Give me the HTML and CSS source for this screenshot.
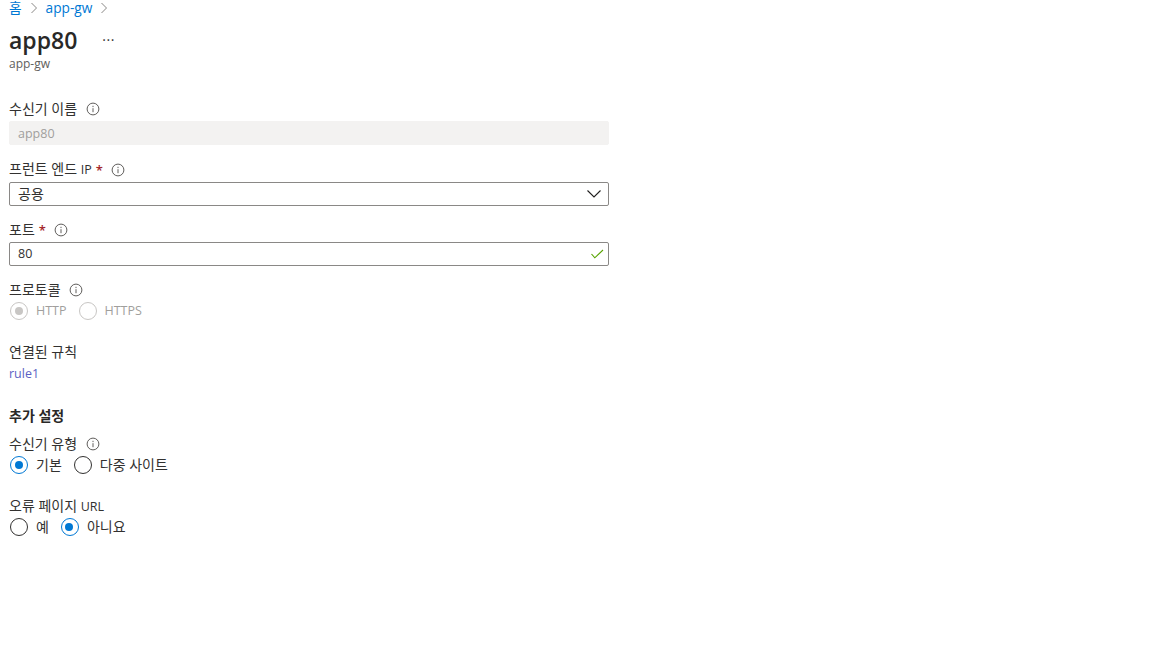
FILE: index.html
```html
<!DOCTYPE html>
<html lang="ko">
<head>
<meta charset="utf-8">
<title>app80</title>
<link rel="stylesheet" href="styles.css">
</head>
<body>
<nav class="crumbs">
  <a class="crumb">홈</a>
  <svg class="chev" viewBox="0 0 8 12"><path d="M1.5 1l5 5-5 5"/></svg>
  <a class="crumb">app-gw</a>
  <svg class="chev" viewBox="0 0 8 12"><path d="M1.5 1l5 5-5 5"/></svg>
</nav>
<header class="head">
  <div class="title-row"><h1 class="title">app80</h1><span class="more">···</span></div>
  <div class="sub">app-gw</div>
</header>
<main class="form">
  <section class="field f-name">
    <div class="label"><span>수신기 이름</span><svg class="info" viewBox="0 0 14 14"><circle cx="7" cy="7" r="5.9"/><path d="M7 6.2v4M7 3.8v1.3"/></svg></div>
    <div class="input disabled lat">app80</div>
  </section>
  <section class="field">
    <div class="label"><span>프런트 엔드 <span class="lat">IP</span></span><span class="req">*</span><svg class="info" viewBox="0 0 14 14"><circle cx="7" cy="7" r="5.9"/><path d="M7 6.2v4M7 3.8v1.3"/></svg></div>
    <div class="input">공용<svg class="end caret" viewBox="0 0 16 10"><path d="M1.5 1.5l6.5 6.5 6.5-6.5"/></svg></div>
  </section>
  <section class="field">
    <div class="label"><span>포트</span><span class="req">*</span><svg class="info" viewBox="0 0 14 14"><circle cx="7" cy="7" r="5.9"/><path d="M7 6.2v4M7 3.8v1.3"/></svg></div>
    <div class="input lat">80<svg class="end tick" viewBox="0 0 14 10"><path d="M1.5 5l3.3 3.8L13 1"/></svg></div>
  </section>
  <section class="field">
    <div class="label"><span>프로토콜</span><svg class="info" viewBox="0 0 14 14"><circle cx="7" cy="7" r="5.9"/><path d="M7 6.2v4M7 3.8v1.3"/></svg></div>
    <div class="radios off lat">
      <span class="radio"><i class="dot on"></i>HTTP</span>
      <span class="radio"><i class="dot"></i>HTTPS</span>
    </div>
  </section>
  <section class="field f-rule">
    <div class="label"><span>연결된 규칙</span></div>
    <a class="link lat">rule1</a>
  </section>
  <h2 class="section">추가 설정</h2>
  <section class="field f-type">
    <div class="label"><span>수신기 유형</span><svg class="info" viewBox="0 0 14 14"><circle cx="7" cy="7" r="5.9"/><path d="M7 6.2v4M7 3.8v1.3"/></svg></div>
    <div class="radios">
      <span class="radio"><i class="dot on"></i>기본</span>
      <span class="radio"><i class="dot"></i>다중 사이트</span>
    </div>
  </section>
  <section class="field f-err">
    <div class="label"><span>오류 페이지 <span class="lat">URL</span></span></div>
    <div class="radios">
      <span class="radio"><i class="dot"></i>예</span>
      <span class="radio"><i class="dot on"></i>아니요</span>
    </div>
  </section>
</main>
</body>
</html>
```
FILE: styles.css
```css
* { box-sizing: border-box; }
html, body { height: 100%; }
body {
  margin: 0;
  padding: 0 0 0 9px;
  background: #fff;
  color: #323130;
  font: 14px/18px "Open Sans", "Noto Sans CJK KR", sans-serif;
  overflow: hidden;
}
.lat { font-size: 12.5px; }
.crumbs { display: flex; align-items: center; gap: 8px; height: 16px; color: #0078d4; }
.crumb { color: #0078d4; line-height: 16px; font-size: 13.7px; }
.chev { width: 8px; height: 12px; fill: none; stroke: #8a8886; stroke-width: 1; }
.head { margin-top: 9px; }
.title-row { display: flex; align-items: center; height: 30px; }
.title { margin: 0; font-size: 23px; line-height: 30px; font-weight: 600; color: #292827; }
.more { margin-left: 25px; font-size: 14px; line-height: 18px; letter-spacing: 0.5px; }
.sub { margin-top: 1px; font-size: 12px; line-height: 16px; color: #605e5c; }
.form { width: 600px; margin-top: 26px; }
.field { margin-bottom: 13px; }
.f-name { margin-bottom: 14px; }
.label { display: flex; align-items: center; gap: 4px; height: 21px; }
.info { width: 14px; height: 14px; margin-left: 4.5px; fill: none; stroke: #605e5c; stroke-width: 1; }
.req { color: #a4262c; font-weight: 600; font-size: 13px; }
.input {
  position: relative;
  height: 24px;
  margin-top: 2px;
  padding: 0 8px;
  line-height: 22px;
  border: 1px solid #8a8886;
  border-radius: 2px;
}
.input.disabled { padding-top: 1px; background: #f3f2f1; border-color: #f3f2f1; color: #a19f9d; }
.end { position: absolute; fill: none; }
.caret { right: 6px; top: 6px; width: 16px; height: 10px; stroke: #201f1e; stroke-width: 1.1; }
.tick { right: 4px; top: 6px; width: 14px; height: 10px; stroke: #57a300; stroke-width: 1.1; }
.radios { display: flex; gap: 11px; height: 20px; }
.radios.off, .f-type .radios { margin-top: 1px; }
.radio { display: flex; align-items: center; gap: 8px; }
.dot {
  position: relative;
  width: 18px;
  height: 18px;
  margin-left: 1px;
  border: 1.5px solid #323130;
  border-radius: 50%;
}
.dot.on { border-color: #0078d4; }
.dot.on::after {
  content: "";
  position: absolute;
  left: 3.5px;
  top: 3.5px;
  width: 8px;
  height: 8px;
  border-radius: 50%;
  background: #0078d4;
}
.off .radio { color: #a19f9d; }
.off .dot { border-color: #c8c6c4; }
.off .dot.on::after { background: #c8c6c4; }
.f-rule { margin-top: 20px; }
.link { display: block; margin-top: 3px; color: #5c5fc4; }
.section { margin: 23px 0 0; font-size: 14px; line-height: 20px; font-weight: 700; color: #292827; }
.f-type { margin: 7px 0 0; }
.f-err { margin: 21px 0 0; }
```
